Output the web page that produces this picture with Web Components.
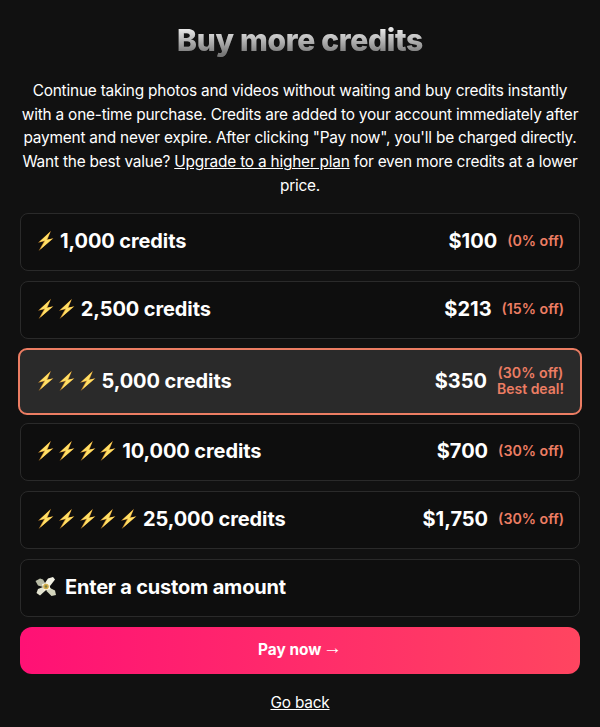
<!DOCTYPE html>
<html>
<head>
<meta charset="utf-8">
<title>Buy more credits</title>
<style>
    html, body { margin: 0; background: #111; }
    body { font-family: Inter, "Liberation Sans", sans-serif; color: #fff; }
</style>
</head>
<body>
<credits-page>
    <credit-option bolts="1" price="$100" off="(0% off)">1,000 credits</credit-option>
    <credit-option bolts="2" price="$213" off="(15% off)">2,500 credits</credit-option>
    <credit-option bolts="3" price="$350" off="(30% off)" best>5,000 credits</credit-option>
    <credit-option bolts="4" price="$700" off="(30% off)">10,000 credits</credit-option>
    <credit-option bolts="5" price="$1,750" off="(30% off)">25,000 credits</credit-option>
    <credit-option custom>Enter a custom amount</credit-option>
</credits-page>
<script>
customElements.define('bolt-icon', class BoltIcon extends HTMLElement
{
    constructor()
    {
        super();
        this.attachShadow({ mode: 'open' });
        this.shadowRoot.innerHTML = `
            <style>
                :host { display: block; width: 17px; height: 22px; }
                svg { display: block; }
            </style>
            <svg width="17" height="22" viewBox="0 0 17 22">
                <path d="M14 .8 1 12.800 7 11.300 1.600 21 16.500 8.200 10.500 9.600z" fill="#c98a2e"/>
                <path d="M13.300 1.800 2.300 12.100 8.300 10.500 3.200 19.500 15.800 8.400 9.500 9.900z" fill="#ffe066"/>
            </svg>
        `;
    }
});

customElements.define('money-icon', class MoneyIcon extends HTMLElement
{
    constructor()
    {
        super();
        this.attachShadow({ mode: 'open' });
        this.shadowRoot.innerHTML = `
            <style>
                :host { display: block; width: 22px; height: 22px; }
                svg { display: block; }
            </style>
            <svg width="22" height="22" viewBox="0 0 22 22">
                <path d="M.5 5 5 2.500 8 3.500 11 8.500 8 11 3 9.500z" fill="#b9bca6"/>
                <path d="M10 7 13 2.500 18 1 20 3.500 15 10z" fill="#f3f2e4"/>
                <path d="M8 11 3 13 1.500 17 5 19.500 10 15z" fill="#e4e4d0"/>
                <path d="M13 11 20 14.500 21 19 16.500 20 11.500 15z" fill="#d2d4bc"/>
                <path d="M7 8 14 6.500 15.500 13 9 15z" fill="#fbf8e4"/>
                <circle cx="11" cy="10.500" r="2.800" fill="#d1ab4a"/>
                <circle cx="11" cy="10.500" r="1.200" fill="#7c8040"/>
            </svg>
        `;
    }
});

customElements.define('credit-option', class CreditOption extends HTMLElement
{
    constructor()
    {
        super();
        this.attachShadow({ mode: 'open' });
    }

    connectedCallback()
    {
        const count = Number(this.getAttribute('bolts') || 0);
        const custom = this.hasAttribute('custom');
        const best = this.hasAttribute('best');
        const price = this.getAttribute('price');
        const off = this.getAttribute('off');

        let icons = '';
        for(let i = 0; i < count; i++) icons += '<bolt-icon></bolt-icon>';
        if(custom) icons = '<money-icon></money-icon>';

        this.shadowRoot.innerHTML = `
            <style>
                :host
                {
                    display: flex;
                    align-items: center;
                    justify-content: space-between;
                    box-sizing: border-box;
                    height: 58px;
                    padding: 0 15px 1px 16px;
                    border: 1px solid #2a2a2a;
                    border-radius: 8px;
                    background: #0e0e0e;
                    font-size: 20px;
                    font-weight: 700;
                    letter-spacing: -.1px;
                }
                :host([best])
                {
                    height: 67px;
                    margin: -1px -2px -2px;
                    padding: 0 16px 0 17px;
                    border: 2px solid #ec7d63;
                    border-radius: 9px;
                    background: #2a2a2a;
                }
                :host([custom]) { letter-spacing: -.2px; }
                .left { display: flex; align-items: center; }
                .icons { display: flex; gap: 3.750px; margin-right: 6px; }
                :host([custom]) .icons { margin-left: -2px; margin-right: 8px; }
                .right { display: flex; align-items: center; gap: 10px; }
                .price { letter-spacing: 0; }
                .note
                {
                    color: #ec7d63;
                    font-size: 14.2px;
                    font-weight: 600;
                    line-height: 16px;
                    text-align: center;
                    letter-spacing: 0;
                }
                .best { font-size: 14px; }
            </style>
            <div class="left">
                <div class="icons">${icons}</div>
                <slot></slot>
            </div>
            ${custom ? '' : `
            <div class="right">
                <span class="price">${price}</span>
                <div class="note">
                    <div>${off}</div>
                    ${best ? '<div class="best">Best deal!</div>' : ''}
                </div>
            </div>`}
        `;
    }
});

customElements.define('credits-page', class CreditsPage extends HTMLElement
{
    constructor()
    {
        super();
        this.attachShadow({ mode: 'open' });
        this.shadowRoot.innerHTML = `
            <style>
                :host
                {
                    display: block;
                    box-sizing: border-box;
                    height: 727px;
                    padding: 20px 20px 0;
                    overflow: hidden;
                    text-align: center;
                }
                h1
                {
                    margin: 0;
                    font-size: 30px;
                    line-height: 40px;
                    font-weight: 800;
                    letter-spacing: -.3px;
                    background: linear-gradient(#f6f6f6 15%, #777 85%);
                    -webkit-background-clip: text;
                    background-clip: text;
                    color: transparent;
                    filter: drop-shadow(0 0 .5px rgba(255, 255, 255, .3));
                }
                p
                {
                    margin: 19px 0 15px;
                    font-size: 15.4px;
                    letter-spacing: -.2px;
                    line-height: 23.7px;
                }
                a { color: inherit; text-decoration: underline; }
                .options { display: flex; flex-direction: column; gap: 10px; }
                .pay
                {
                    display: block;
                    width: 100%;
                    height: 47px;
                    margin-top: 10px;
                    border: 0;
                    border-radius: 12px;
                    background: linear-gradient(90deg, #ff1175, #ff4560);
                    color: #fff;
                    font: 700 15.4px Inter, "Liberation Sans", sans-serif;
                    line-height: 20px;
                }
                .pay span { font: 400 19px/0 "Liberation Sans", sans-serif; margin-left: -2px; vertical-align: 1.500px; }
                .back { display: inline-block; margin-top: 19px; font-size: 15.4px; letter-spacing: -.2px; line-height: 20px; }
            </style>
            <h1>Buy more credits</h1>
            <p>Continue taking photos and videos without waiting and buy credits instantly with a one-time purchase. Credits are added to your account immediately after payment and never expire. After clicking "Pay now", you'll be charged directly. Want the best value? <a href="#">Upgrade to a higher plan</a> for even more credits at a lower price.</p>
            <div class="options"><slot></slot></div>
            <button class="pay">Pay now <span>→</span></button>
            <a class="back" href="#">Go back</a>
        `;
    }
});
</script>
</body>
</html>
